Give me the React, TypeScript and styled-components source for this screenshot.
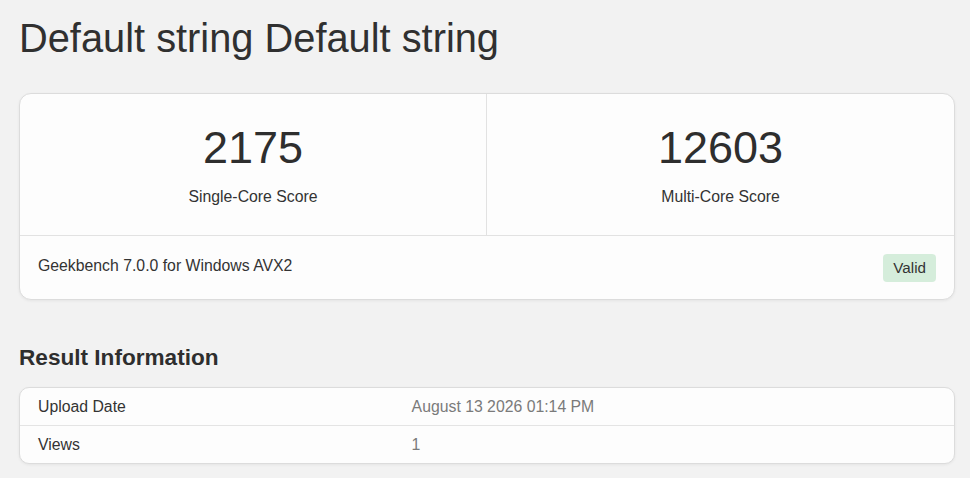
import React from "react";
import styled, { createGlobalStyle } from "styled-components";

const GlobalStyle = createGlobalStyle`
  html, body {
    margin: 0;
    padding: 0;
    background: #f2f2f2;
  }
  body {
    font-family: "Liberation Sans", Arial, sans-serif;
    color: #333;
  }
  * {
    box-sizing: border-box;
  }
`;

const Page = styled.div`
  padding: 14px 15px 20px 19px;
`;

const Title = styled.h1`
  margin: 0 0 31px;
  font-size: 39.8px;
  line-height: 48px;
  font-weight: 400;
  color: #303030;
`;

const Card = styled.div`
  background: #fdfdfd;
  border: 1px solid #dcdcdc;
  border-radius: 12px;
  box-shadow: 0 1px 3px rgba(0, 0, 0, 0.06);
  overflow: hidden;
`;

const ScoreGrid = styled.div`
  display: grid;
  grid-template-columns: 1fr 1fr;
  border-bottom: 1px solid #e2e2e2;
`;

const ScoreCell = styled.div<{ $divider?: boolean }>`
  display: flex;
  flex-direction: column;
  align-items: center;
  padding: 27px 0 29px;
  border-right: ${(p) => (p.$divider ? "1px solid #e2e2e2" : "none")};
`;

const ScoreValue = styled.div`
  font-size: 45px;
  line-height: 54px;
  color: #2e2e2e;
`;

const ScoreLabel = styled.div`
  margin-top: 12px;
  font-size: 15.8px;
  line-height: 19px;
  color: #333;
`;

const CardFooter = styled.div`
  display: flex;
  justify-content: space-between;
  align-items: flex-start;
  padding: 18px 18px 17px;
`;

const Version = styled.div`
  font-size: 15.8px;
  line-height: 24px;
  color: #333;
`;

const Badge = styled.span`
  display: inline-block;
  padding: 4px 10px;
  font-size: 15.2px;
  line-height: 20px;
  background: #d5eddb;
  color: #333;
  border-radius: 4px;
`;

const SectionTitle = styled.h2`
  margin: 44px 0 16px;
  font-size: 22.6px;
  line-height: 27px;
  font-weight: 700;
  color: #2e2e2e;
`;

const InfoTable = styled.div`
  background: #fdfdfd;
  border: 1px solid #dcdcdc;
  border-radius: 10px;
  box-shadow: 0 1px 3px rgba(0, 0, 0, 0.06);
  overflow: hidden;
`;

const InfoRow = styled.div`
  display: grid;
  grid-template-columns: 40% 60%;
  & + & {
    border-top: 1px solid #e4e4e4;
  }
`;

const InfoCell = styled.div<{ $muted?: boolean }>`
  padding: 9px 18px;
  font-size: 15.8px;
  line-height: 19px;
  color: ${(p) => (p.$muted ? "#7a7a7a" : "#333")};
`;

const info = [
  { label: "Upload Date", value: "August 13 2026 01:14 PM" },
  { label: "Views", value: "1" },
];

export default function App() {
  return (
    <>
      <GlobalStyle />
      <Page>
        <Title>Default string Default string</Title>
        <Card>
          <ScoreGrid>
            <ScoreCell $divider>
              <ScoreValue>2175</ScoreValue>
              <ScoreLabel>Single-Core Score</ScoreLabel>
            </ScoreCell>
            <ScoreCell>
              <ScoreValue>12603</ScoreValue>
              <ScoreLabel>Multi-Core Score</ScoreLabel>
            </ScoreCell>
          </ScoreGrid>
          <CardFooter>
            <Version>Geekbench 7.0.0 for Windows AVX2</Version>
            <Badge>Valid</Badge>
          </CardFooter>
        </Card>
        <SectionTitle>Result Information</SectionTitle>
        <InfoTable>
          {info.map((row) => (
            <InfoRow key={row.label}>
              <InfoCell>{row.label}</InfoCell>
              <InfoCell $muted>{row.value}</InfoCell>
            </InfoRow>
          ))}
        </InfoTable>
      </Page>
    </>
  );
}
